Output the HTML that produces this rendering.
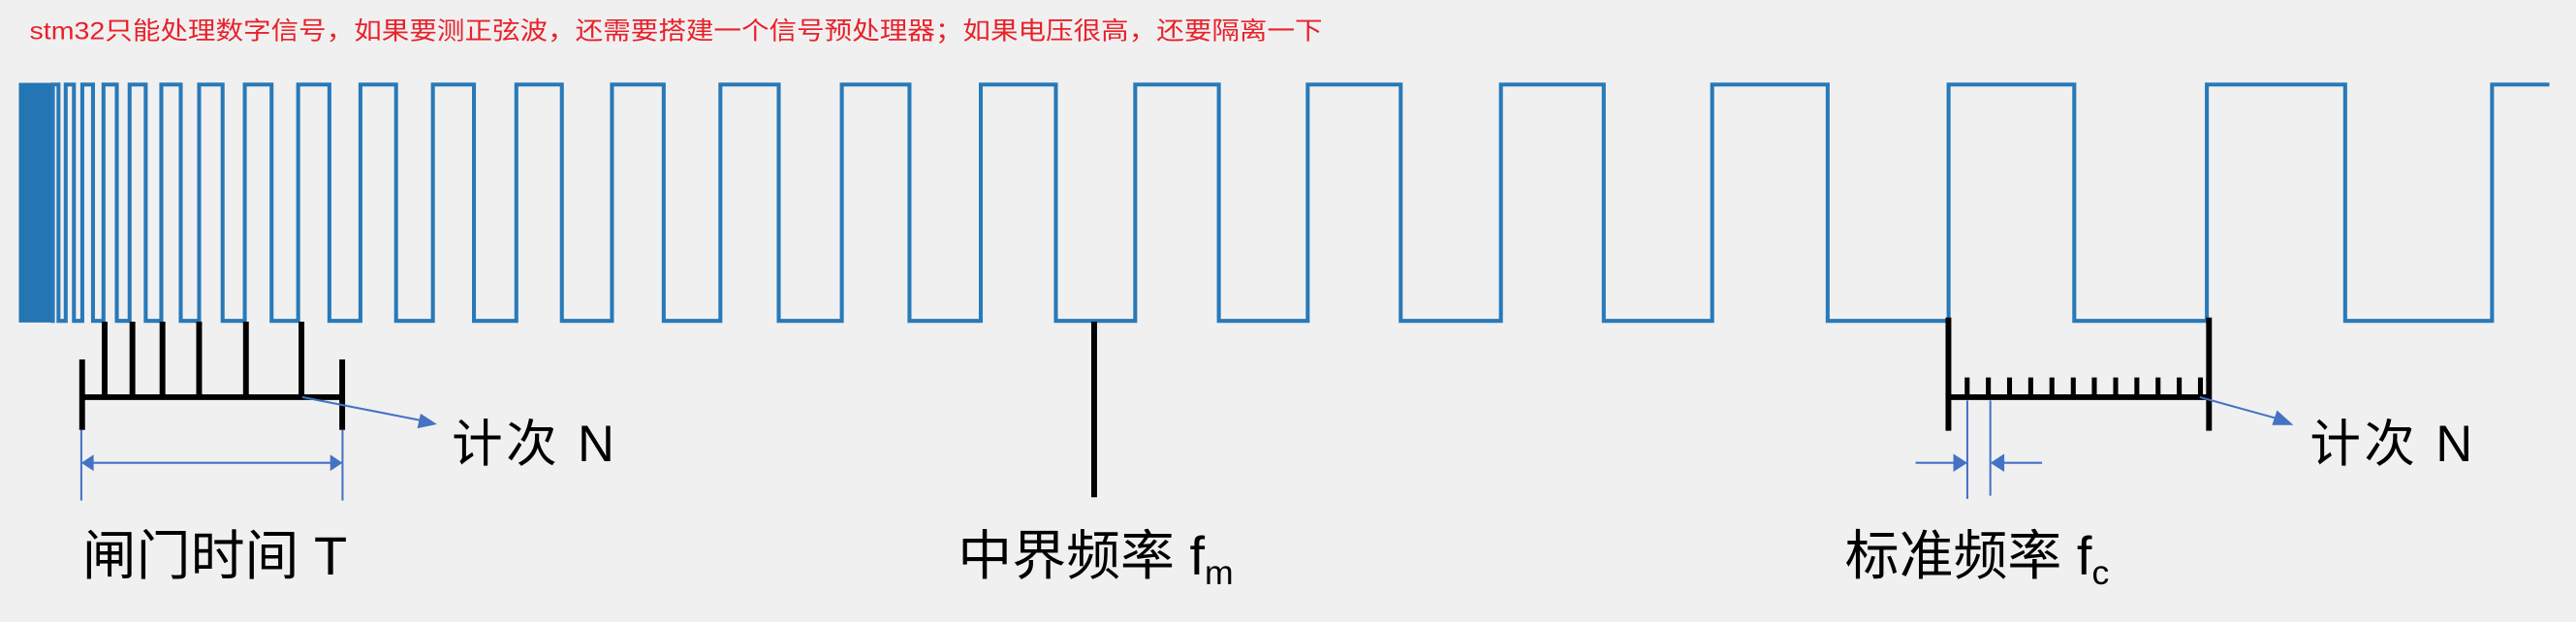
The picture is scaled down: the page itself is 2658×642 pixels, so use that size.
<!DOCTYPE html>
<html><head><meta charset="utf-8"><style>
html,body{margin:0;padding:0;background:#f0f0f0;}
svg{display:block;}
text{font-family:"Liberation Sans","Noto Sans CJK SC",sans-serif;}
</style></head><body>
<svg width="2658" height="642" viewBox="0 0 1568 379" preserveAspectRatio="none" xmlns="http://www.w3.org/2000/svg">
<rect x="0" y="0" width="1568" height="379" fill="#f0f0f0"/>
<text x="18" y="24" font-size="15" fill="#e8212a" textLength="787" lengthAdjust="spacingAndGlyphs">stm32只能处理数字信号，如果要测正弦波，还需要搭建一个信号预处理器；如果电压很高，还要隔离一下</text>
<rect x="11.5" y="50.5" width="20" height="146" fill="#2475b3"/>
<path fill="none" stroke="#2879b8" stroke-width="2.4" stroke-linejoin="miter" d="M31 195.5 L32.2 195.5 L32.2 51.5 L35.6 51.5 L35.6 195.5 L40 195.5 L40 51.5 L45 51.5 L45 195.5 L50.1 195.5 L50.1 51.5 L56.6 51.5 L56.6 195.5 L63 195.5 L63 51.5 L71.1 51.5 L71.1 195.5 L78.9 195.5 L78.9 51.5 L88.7 51.5 L88.7 195.5 L98.2 195.5 L98.2 51.5 L110 51.5 L110 195.5 L121.2 195.5 L121.2 51.5 L135.5 51.5 L135.5 195.5 L149 195.5 L149 51.5 L165.3 51.5 L165.3 195.5 L181.5 195.5 L181.5 51.5 L200.5 51.5 L200.5 195.5 L219.4 195.5 L219.4 51.5 L241.1 51.5 L241.1 195.5 L263.5 195.5 L263.5 51.5 L288.5 51.5 L288.5 195.5 L314.3 195.5 L314.3 51.5 L342 51.5 L342 195.5 L372.5 195.5 L372.5 51.5 L404 51.5 L404 195.5 L438.5 195.5 L438.5 51.5 L474 51.5 L474 195.5 L512.4 195.5 L512.4 51.5 L553.6 51.5 L553.6 195.5 L597 195.5 L597 51.5 L642.7 51.5 L642.7 195.5 L691 195.5 L691 51.5 L741.9 51.5 L741.9 195.5 L796 195.5 L796 51.5 L852.6 51.5 L852.6 195.5 L913.6 195.5 L913.6 51.5 L976.2 51.5 L976.2 195.5 L1042.2 195.5 L1042.2 51.5 L1112.5 51.5 L1112.5 195.5 L1186.1 195.5 L1186.1 51.5 L1262.6 51.5 L1262.6 195.5 L1343.3 195.5 L1343.3 51.5 L1427.5 51.5 L1427.5 195.5 L1516.9 195.5 L1516.9 51.5 L1551.8 51.5"/>
<g stroke="#000" stroke-width="3.5" fill="none">
<line x1="50" y1="219" x2="50" y2="262"/>
<line x1="208.3" y1="219" x2="208.3" y2="262"/>
<line x1="48.5" y1="242" x2="210" y2="242"/>
<line x1="63.7" y1="196" x2="63.7" y2="242"/>
<line x1="80.6" y1="196" x2="80.6" y2="242"/>
<line x1="98.9" y1="196" x2="98.9" y2="242"/>
<line x1="121.2" y1="196" x2="121.2" y2="242"/>
<line x1="149.7" y1="196" x2="149.7" y2="242"/>
<line x1="183.5" y1="196" x2="183.5" y2="242"/>
<line x1="666" y1="196" x2="666" y2="303"/>
<line x1="1186" y1="193.5" x2="1186" y2="262.5"/>
<line x1="1344.6" y1="193.5" x2="1344.6" y2="262.5"/>
<line x1="1186" y1="242" x2="1344.6" y2="242"/>
</g>
<g stroke="#000" stroke-width="3">
<line x1="1197.4" y1="230" x2="1197.4" y2="242"/>
<line x1="1210.3" y1="230" x2="1210.3" y2="242"/>
<line x1="1223.2" y1="230" x2="1223.2" y2="242"/>
<line x1="1236.1" y1="230" x2="1236.1" y2="242"/>
<line x1="1249" y1="230" x2="1249" y2="242"/>
<line x1="1262" y1="230" x2="1262" y2="242"/>
<line x1="1274.8" y1="230" x2="1274.8" y2="242"/>
<line x1="1287.8" y1="230" x2="1287.8" y2="242"/>
<line x1="1300.7" y1="230" x2="1300.7" y2="242"/>
<line x1="1313.6" y1="230" x2="1313.6" y2="242"/>
<line x1="1326.5" y1="230" x2="1326.5" y2="242"/>
<line x1="1339.4" y1="230" x2="1339.4" y2="242"/>
</g>
<g stroke="#4472c4" stroke-width="1.2" fill="none">
<line x1="184" y1="242" x2="258" y2="256.5"/>
<line x1="1339" y1="242" x2="1386" y2="255"/>
<line x1="49.5" y1="262" x2="49.5" y2="305"/>
<line x1="208.5" y1="262" x2="208.5" y2="305"/>
<line x1="56" y1="282" x2="202" y2="282"/>
<line x1="1197.5" y1="244" x2="1197.5" y2="304"/>
<line x1="1211.5" y1="244" x2="1211.5" y2="302"/>
<line x1="1166" y1="282" x2="1190" y2="282"/>
<line x1="1219" y1="282" x2="1243" y2="282"/>
</g>
<g fill="#4472c4">
<polygon points="266,258.5 256,252 254,261"/>
<polygon points="1396,259 1386,250 1383,259"/>
<polygon points="49.5,282 57,277 57,287"/>
<polygon points="208.5,282 201,277 201,287"/>
<polygon points="1197.5,282 1189,276.5 1189,287.5"/>
<polygon points="1211.5,282 1220,276.5 1220,287.5"/>
</g>
<g fill="#000">
<text x="275" y="281" font-size="31" textLength="99" lengthAdjust="spacing">计次 N</text>
<text x="1406" y="281" font-size="31" textLength="99" lengthAdjust="spacing">计次 N</text>
<text x="50" y="350" font-size="33">闸门时间 T</text>
<text x="583" y="350" font-size="33">中界频率 f<tspan font-size="21" dy="6">m</tspan></text>
<text x="1123" y="350" font-size="33">标准频率 f<tspan font-size="21" dy="6">c</tspan></text>
</g>
</svg>
</body></html>
